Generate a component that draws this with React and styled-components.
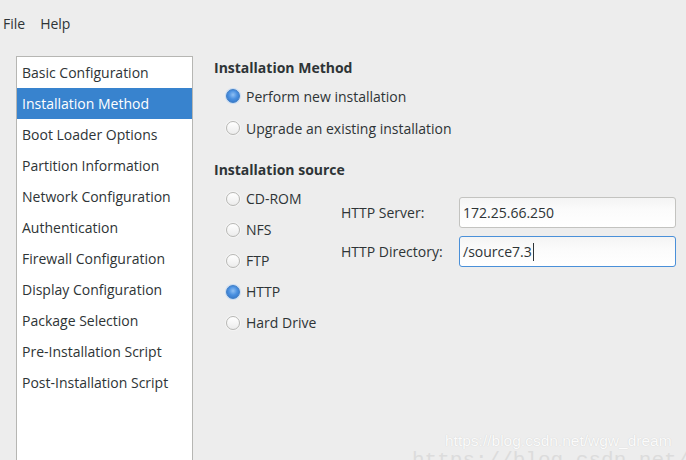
import React from "react";
import styled, { createGlobalStyle } from "styled-components";

const Global = createGlobalStyle`
  html, body { margin: 0; padding: 0; background: #ededed; overflow: hidden; }
  body { font-family: "Open Sans", "DejaVu Sans", sans-serif; font-size: 13.5px; color: #2e3436; }
`;

const Page = styled.div`
  position: relative;
  width: 686px;
  height: 460px;
  overflow: hidden;
  display: flex;
  flex-direction: column;
`;

const MenuBar = styled.div`
  display: flex;
  flex: 0 0 46px;
  height: 46px;
  align-items: center;
  padding-left: 3px;
  gap: 15px;
`;

const MenuItem = styled.span`
  font-size: 14px;
  color: #2e3436;
`;

const Main = styled.div`
  display: flex;
  flex: 1 1 auto;
  min-height: 0;
  padding: 10px 0 0 16px;
`;

const Sidebar = styled.div`
  width: 175px;
  flex: 0 0 175px;
  background: #fff;
  border: 1px solid #b6b6b3;
  border-bottom: none;
  display: flex;
  flex-direction: column;
`;

const SideItem = styled.div`
  height: 31px;
  line-height: 31px;
  padding-left: 5px;
  font-size: 14px;
  background: ${(p) => (p.$active ? "#3883ce" : "transparent")};
  color: ${(p) => (p.$active ? "#ffffff" : "#2e3436")};
  white-space: nowrap;
`;

const Content = styled.div`
  padding-left: 21px;
  display: flex;
  flex-direction: column;
`;

const Heading = styled.div`
  font-weight: 700;
  font-size: 14px;
  height: 24px;
  line-height: 24px;
`;

const RadioRow = styled.label`
  display: flex;
  align-items: center;
  height: ${(p) => p.$h || 31}px;
  padding-left: 12px;
  gap: 6px;
  font-size: 14px;
  white-space: nowrap;
`;

const RadioDot = styled.span`
  width: 14px;
  height: 14px;
  border-radius: 50%;
  box-sizing: border-box;
  border: 1px solid ${(p) => (p.$on ? "#3c7dc8" : "#b8b8b5")};
  background: ${(p) =>
    p.$on
      ? "radial-gradient(circle at 50% 40%, #8fc0f4 0%, #4a90e0 45%, #2f6fc0 100%)"
      : "linear-gradient(#ffffff, #ececec)"};
  box-shadow: ${(p) => (p.$on ? "0 0 0 1px #c9dcf2" : "0 0 0 1px #f4f4f4")};
  flex: 0 0 auto;
`;

const Section = styled.div`
  margin-top: ${(p) => p.$mt || 0}px;
`;

const MethodGroup = styled.div`
  display: flex;
  flex-direction: column;
`;

const SourceRow = styled.div`
  display: flex;
  padding-top: 1px;
`;

const SourceRadios = styled.div`
  width: 127px;
  display: flex;
  flex-direction: column;
`;

const Form = styled.div`
  display: grid;
  grid-template-columns: 118px 217px;
  row-gap: 8px;
  align-items: center;
  margin-top: 14px;
  align-self: flex-start;
`;

const FieldLabel = styled.div`
  font-size: 14px;
  white-space: nowrap;
`;

const Input = styled.div`
  height: 31px;
  box-sizing: border-box;
  border: 1px solid ${(p) => (p.$focus ? "#4a90d9" : "#c3c3c0")};
  border-radius: 3px;
  background: linear-gradient(#f4f4f4, #fbfbfb 40%, #ffffff);
  display: flex;
  align-items: center;
  padding-left: 3px;
  font-size: 14px;
  color: #2e3436;
`;

const Caret = styled.span`
  display: inline-block;
  width: 1px;
  height: 18px;
  background: #2e3436;
  margin-left: 1px;
`;

const Watermark = styled.div`
  position: absolute;
  left: 445px;
  top: 432px;
  font-family: "Liberation Sans", Arial, sans-serif;
  font-size: 15.5px;
  color: #fbfbfb;
  text-shadow: 0 0 1px #c8c8c8;
  white-space: nowrap;
`;

const Watermark2 = styled.div`
  position: absolute;
  left: 412px;
  top: 449px;
  font-family: "Liberation Mono", "DejaVu Sans Mono", monospace;
  font-size: 21px;
  color: #dcdcdc;
  white-space: nowrap;
`;

const sideItems = [
  "Basic Configuration",
  "Installation Method",
  "Boot Loader Options",
  "Partition Information",
  "Network Configuration",
  "Authentication",
  "Firewall Configuration",
  "Display Configuration",
  "Package Selection",
  "Pre-Installation Script",
  "Post-Installation Script",
];

const sources = [
  ["CD-ROM", false],
  ["NFS", false],
  ["FTP", false],
  ["HTTP", true],
  ["Hard Drive", false],
];

export default function App() {
  return (
    <Page>
      <Global />
      <MenuBar>
        <MenuItem>File</MenuItem>
        <MenuItem>Help</MenuItem>
      </MenuBar>
      <Main>
        <Sidebar>
          {sideItems.map((s) => (
            <SideItem key={s} $active={s === "Installation Method"}>
              {s}
            </SideItem>
          ))}
        </Sidebar>
        <Content>
          <Section>
            <Heading>Installation Method</Heading>
            <MethodGroup>
              <RadioRow $h={32}>
                <RadioDot $on />
                Perform new installation
              </RadioRow>
              <RadioRow $h={32}>
                <RadioDot />
                Upgrade an existing installation
              </RadioRow>
            </MethodGroup>
          </Section>
          <Section $mt={14}>
            <Heading>Installation source</Heading>
            <SourceRow>
              <SourceRadios>
                {sources.map(([s, on]) => (
                  <RadioRow key={s}>
                    <RadioDot $on={on} />
                    {s}
                  </RadioRow>
                ))}
              </SourceRadios>
              <Form>
                <FieldLabel>HTTP Server:</FieldLabel>
                <Input>172.25.66.250</Input>
                <FieldLabel>HTTP Directory:</FieldLabel>
                <Input $focus>
                  /source7.3
                  <Caret />
                </Input>
              </Form>
            </SourceRow>
          </Section>
        </Content>
      </Main>
      <Watermark>https://blog.csdn.net/wgw_dream</Watermark>
      <Watermark2>https://blog.csdn.net/gd0306</Watermark2>
    </Page>
  );
}
